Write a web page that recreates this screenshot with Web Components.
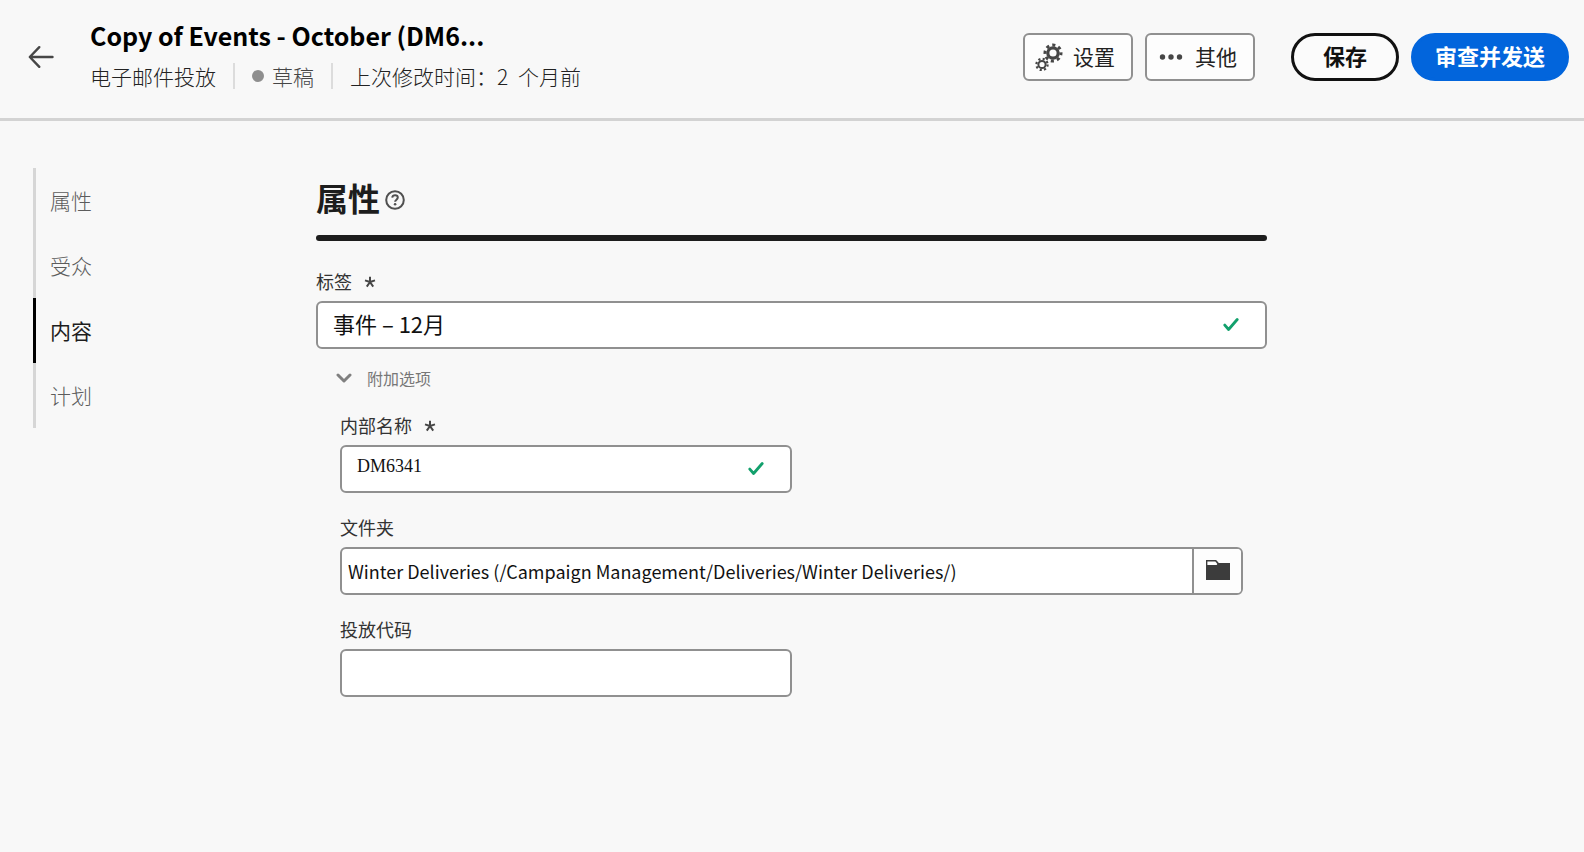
<!DOCTYPE html>
<html lang="zh-CN">
<head>
<meta charset="utf-8">
<title>电子邮件投放</title>
<style>
  html, body { margin: 0; min-height: 100%; }
  body {
    background: #f8f8f8;
    color: #222;
    font-family: "Noto Sans CJK SC", sans-serif;
    font-size: 21px;
  }
</style>
</head>
<body>
<delivery-page></delivery-page>

<template id="t-page">
  <style>
    :host { display: block; }
    main { display: grid; grid-template-columns: 316px minmax(0, 1fr) 20%; padding-top: 47px; }
    side-rail { justify-self: start; margin-left: 33px; }
    .heading { display: flex; align-items: center; gap: 5px; height: 64px; }
    h2 { margin: 0; padding-bottom: 6px; font-size: 32px; line-height: 40px; font-weight: 700; color: #1d1d1d; }
    .bar { height: 6px; margin: 3px 0 28px; border: 0; border-radius: 3px; background: #1d1d1d; }
    .help { display: flex; padding: 0; border: 0; background: none; }
  </style>
  <page-header></page-header>
  <main>
    <side-rail>
      <rail-item>属性</rail-item>
      <rail-item>受众</rail-item>
      <rail-item active>内容</rail-item>
      <rail-item>计划</rail-item>
    </side-rail>
    <section>
      <div class="heading">
        <h2>属性</h2>
        <button class="help" type="button" aria-label="帮助">
          <svg width="20" height="20" viewBox="0 0 20 20" fill="none" stroke="#505050" stroke-width="2">
            <circle cx="10" cy="10" r="8.8"/>
            <path d="M7.2 7.6C7.5 5.9 8.800 5.3 10.1 5.3c1.6 0 2.7.9 2.7 2.3 0 2-2.7 2.2-2.7 4.2"/>
            <circle cx="10.1" cy="14.3" r="1.3" fill="#505050" stroke="none"/>
          </svg>
        </button>
      </div>
      <hr class="bar">
      <text-field label="标签" value="事件 – 12月" required valid></text-field>
      <option-group label="附加选项">
        <text-field class="half" label="内部名称" value="DM6341" required valid latin></text-field>
        <folder-field label="文件夹" value="Winter Deliveries (/Campaign Management/Deliveries/Winter Deliveries/)"></folder-field>
        <text-field class="half" label="投放代码" value=""></text-field>
      </option-group>
    </section>
  </main>
</template>

<template id="t-header">
  <style>
    :host {
      display: flex; align-items: flex-start; box-sizing: border-box;
      min-height: 121px; padding: 0 15px 0 23px;
      border-bottom: 3px solid #d3d3d3;
    }
    .back { display: flex; margin-top: 41px; padding: 4px 5px; border: 0; background: none; }
    .info { flex: 1; min-width: 0; margin: 17px 16px 0 31px; }
    h1 { margin: 0; font-size: 25px; line-height: 36px; font-weight: 700; color: #000; white-space: nowrap; }
    .meta { display: flex; align-items: center; margin-top: 8px; line-height: 30px; white-space: nowrap; font-weight: 300; }
    .sep { width: 2px; height: 26px; background: #dcdcdc; margin: 0 17px; }
    .status { display: flex; align-items: center; gap: 8px; color: #464646; }
    .dot { width: 12px; height: 12px; border-radius: 50%; background: #8e8e8e; }
    .num { margin-right: 5px; }
    .actions { display: flex; gap: 12px; margin-top: 33px; }
    .actions .first-pill { margin-left: 24px; }
  </style>
  <button class="back" type="button" aria-label="返回">
    <svg width="26" height="24" viewBox="0 0 26 24" fill="none" stroke="#464646" stroke-width="2.4" stroke-linecap="round" stroke-linejoin="round"><path d="M24.500 12H2M11.3 2.2 1.8 12l9.5 9.8"/></svg>
  </button>
  <div class="info">
    <h1>Copy of Events - October (DM6...</h1>
    <div class="meta">
      <span>电子邮件投放</span><i class="sep"></i>
      <span class="status"><i class="dot"></i>草稿</span><i class="sep"></i>
      <span>上次修改时间：<span class="num">2</span> 个月前</span>
    </div>
  </div>
  <div class="actions">
    <action-button>
      <svg slot="icon" width="28" height="28" viewBox="0 0 28 28" fill="none" stroke="#464646">
        <circle cx="18" cy="10" r="5.2" stroke-width="3.2"/>
        <circle cx="18" cy="10" r="8" stroke-width="3" stroke-dasharray="3.1 3.183" stroke-dashoffset="1"/>
        <circle cx="7" cy="21.5" r="3.6" stroke-width="2"/>
        <circle cx="7" cy="21.5" r="5.6" stroke-width="2.2" stroke-dasharray="2.1 2.298"/>
      </svg>设置</action-button>
    <action-button>
      <svg slot="icon" width="28" height="28" viewBox="0 0 28 28" fill="#464646"><circle cx="5.500" cy="14" r="2.700"/><circle cx="14" cy="14" r="2.700"/><circle cx="22.500" cy="14" r="2.700"/></svg>其他</action-button>
    <pill-button class="first-pill">保存</pill-button>
    <pill-button accent>审查并发送</pill-button>
  </div>
</template>

<template id="t-action">
  <style>
    :host { display: block; }
    button {
      display: flex; align-items: center; gap: 10px; box-sizing: border-box;
      height: 48px; padding: 0 16px 0 10px;
      border: 2px solid #909090; border-radius: 6px; background: #fdfdfd;
      color: #222; font: inherit; line-height: 28px; white-space: nowrap;
    }
    span { padding-bottom: 2px; }
  </style>
  <button type="button"><slot name="icon"></slot><span><slot></slot></span></button>
</template>

<template id="t-pill">
  <style>
    :host { display: block; }
    button {
      box-sizing: border-box; height: 48px; padding: 0 29px 4px;
      border: 3px solid #111; border-radius: 24px; background: #fbfbfb;
      color: #111; font: inherit; font-size: 22px; line-height: 30px; font-weight: 700; white-space: nowrap;
    }
    :host([accent]) button { padding: 0 21px 4px; border-color: #0265dc; background: #0265dc; color: #fff; }
  </style>
  <button type="button"><slot></slot></button>
</template>

<template id="t-rail">
  <style>:host { display: block; }</style>
  <nav><slot></slot></nav>
</template>

<template id="t-rail-item">
  <style>
    :host { display: block; }
    a {
      display: block; padding-left: 14px; border-left: 3px solid #d6d6d6;
      line-height: 65px; font-weight: 300; color: #5c5c5c; text-decoration: none;
    }
    :host([active]) a { border-color: #000; color: #1d1d1d; font-weight: 400; }
  </style>
  <a href="#"><slot></slot></a>
</template>

<template id="t-field">
  <style>
    :host { display: block; }
    :host(.half) { width: 50%; }
    label { display: flex; align-items: center; gap: 12px; margin-bottom: 8px; font-size: 18px; line-height: 24px; color: #333; }
    .star { display: none; }
    :host([required]) .star { display: block; padding-top: 2px; }
    .box {
      display: flex; align-items: center; box-sizing: border-box; height: 48px;
      padding: 0 26px 0 15px; border: 2px solid #909090; border-radius: 6px; background: #fff;
    }
    input {
      flex: 1; min-width: 0; height: 44px; box-sizing: border-box; padding: 0 0 5px; border: 0; outline: 0; background: none;
      color: #111; font: inherit; font-size: 22px;
    }
    :host([latin]) input { font-family: "Liberation Serif", serif; font-size: 18px; }
    .tick { display: none; }
    :host([valid]) .tick { display: block; }
  </style>
  <label for="f"><span class="text"></span>
    <svg class="star" width="12" height="12" viewBox="0 0 12 12" stroke="#464646" stroke-width="2"><path d="M6 6V.8M6 6l5-1.6M6 6l3.2 4.6M6 6l-3.2 4.6M6 6 1 4.4"/></svg>
  </label>
  <div class="box">
    <input id="f" type="text">
    <svg class="tick" width="16" height="14" viewBox="0 0 16 14" fill="none" stroke="#12a06c" stroke-width="2.800" stroke-linecap="round" stroke-linejoin="round"><path d="M1.800 7.100 5.600 11.500 14.200 1.500"/></svg>
  </div>
</template>

<template id="t-folder">
  <style>
    :host { display: block; }
    label { display: block; margin-bottom: 8px; font-size: 18px; line-height: 24px; color: #333; }
    .box {
      display: flex; box-sizing: border-box; height: 48px;
      border: 2px solid #909090; border-radius: 6px; background: #fff; overflow: hidden;
    }
    input { flex: 1; min-width: 0; padding: 0 6px 1px; border: 0; outline: 0; background: none; color: #111; font: inherit; font-size: 18px; }
    button {
      display: flex; align-items: center; justify-content: center; width: 49px; padding: 0 0 2px;
      border: 0; border-left: 2px solid #909090; background: #fdfdfd;
    }
  </style>
  <label for="f"><span class="text"></span></label>
  <div class="box">
    <input id="f" type="text">
    <button type="button" aria-label="选择文件夹">
      <svg width="24" height="20" viewBox="0 0 24 20"><path d="M0 0h9.500q1 0 1.600.9L12.800 3H24v17H0z" fill="#3c3c3c"/><path d="M1.400 1.500h8l1.900 2.600-.6.9H1.400z" fill="#fff"/></svg>
    </button>
  </div>
</template>

<template id="t-group">
  <style>
    :host { display: block; padding: 17px 24px 0; }
    button {
      display: flex; align-items: center; gap: 15px; height: 24px; margin: 0 0 23px -4px; padding: 0;
      border: 0; background: none; color: #777; font: inherit; font-size: 16px; line-height: 24px;
    }
    .body { display: flex; flex-direction: column; gap: 22px; }
  </style>
  <button type="button" aria-expanded="true">
    <svg width="16" height="10" viewBox="0 0 16 10" fill="none" stroke="#808080" stroke-width="3" stroke-linecap="round" stroke-linejoin="round"><path d="M2 2l6 6 6-6"/></svg>
    <span class="text"></span>
  </button>
  <div class="body"><slot></slot></div>
</template>

<script>
  class Base extends HTMLElement {
    constructor() {
      super();
      const tpl = document.getElementById(this.constructor.template);
      this.attachShadow({ mode: "open" }).append(document.importNode(tpl.content, true));
    }
  }
  class Labelled extends Base {
    connectedCallback() {
      this.shadowRoot.querySelector(".text").textContent = this.getAttribute("label");
      const input = this.shadowRoot.querySelector("input");
      if (input) {
        input.value = this.getAttribute("value") || "";
        input.required = this.hasAttribute("required");
      }
    }
  }
  customElements.define("action-button", class extends Base { static template = "t-action"; });
  customElements.define("pill-button", class extends Base { static template = "t-pill"; });
  customElements.define("rail-item", class extends Base { static template = "t-rail-item"; });
  customElements.define("side-rail", class extends Base { static template = "t-rail"; });
  customElements.define("text-field", class extends Labelled { static template = "t-field"; });
  customElements.define("folder-field", class extends Labelled { static template = "t-folder"; });
  customElements.define("option-group", class extends Labelled { static template = "t-group"; });
  customElements.define("page-header", class extends Base { static template = "t-header"; });
  customElements.define("delivery-page", class extends Base { static template = "t-page"; });
</script>
</body>
</html>
